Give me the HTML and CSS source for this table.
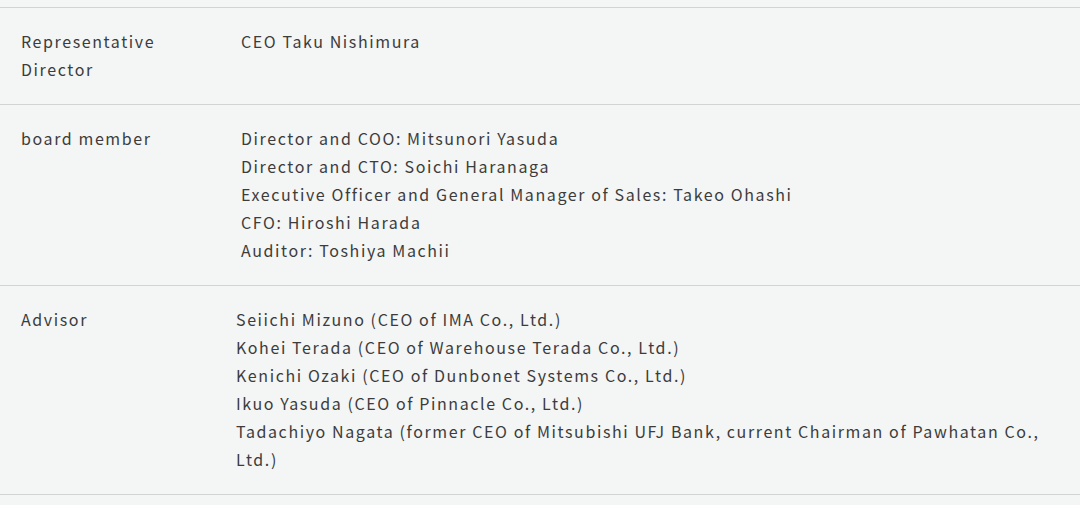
FILE: index.html
```html
<!DOCTYPE html>
<html lang="en">
<head>
<meta charset="utf-8">
<title>Company officers</title>
<link rel="stylesheet" href="styles.css">
</head>
<body>
<dl class="officers">
  <div class="row">
    <dt class="label">Representative<br>Director</dt>
    <dd class="value">CEO Taku Nishimura</dd>
  </div>
  <div class="row">
    <dt class="label">board member</dt>
    <dd class="value">Director and COO: Mitsunori Yasuda<br>Director and CTO: Soichi Haranaga<br>Executive Officer and General Manager of Sales: Takeo Ohashi<br>CFO: Hiroshi Harada<br>Auditor: Toshiya Machii</dd>
  </div>
  <div class="row">
    <dt class="label">Advisor</dt>
    <dd class="value value--shift">Seiichi Mizuno (CEO of IMA Co., Ltd.)<br>Kohei Terada (CEO of Warehouse Terada Co., Ltd.)<br>Kenichi Ozaki (CEO of Dunbonet Systems Co., Ltd.)<br>Ikuo Yasuda (CEO of Pinnacle Co., Ltd.)<br>Tadachiyo Nagata (former CEO of Mitsubishi UFJ Bank, current Chairman of Pawhatan Co., Ltd.)</dd>
  </div>
</dl>
</body>
</html>
```
FILE: styles.css
```css
html, body {
  margin: 0;
  padding: 0;
  background: #f4f5f5;
}
body {
  padding-top: 7px;
  font-family: "Noto Sans CJK JP", "Noto Sans", sans-serif;
  font-size: 16px;
  line-height: 28px;
  letter-spacing: 0.1em;
  color: #3c3c3c;
}
.officers {
  margin: 0;
  border-top: 1px solid #d2d3d3;
}
.row {
  display: flex;
  padding: 19px 20px 21px 21px;
  border-bottom: 1px solid #d2d3d3;
}
.label {
  width: 220px;
  flex: none;
  margin: 0;
}
.value {
  margin: 0;
  flex: 1;
}
.value--shift {
  margin-left: -5px;
}
```
